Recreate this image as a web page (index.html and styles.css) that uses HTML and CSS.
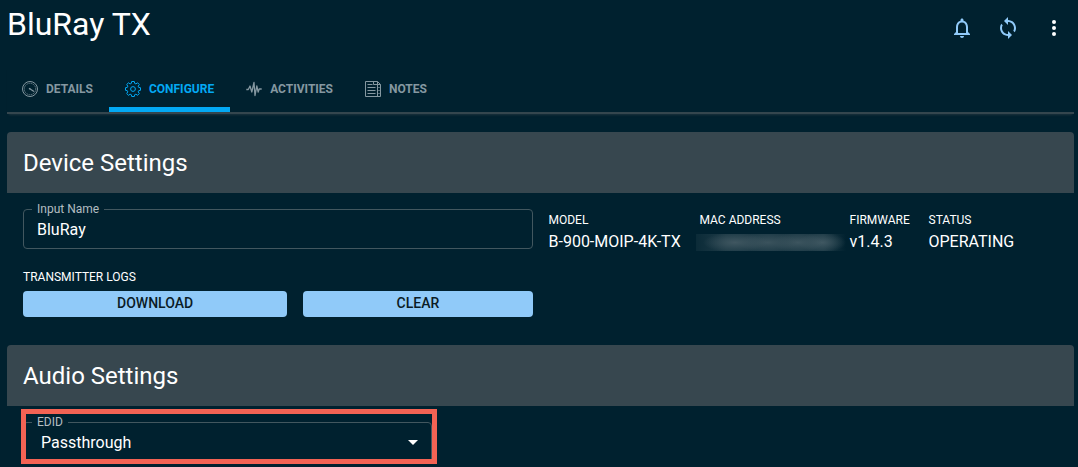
FILE: index.html
```html
<!DOCTYPE html>
<html lang="en">
<head>
<meta charset="utf-8">
<meta name="viewport" content="width=device-width, initial-scale=1">
<title>BluRay TX</title>
<link rel="stylesheet" href="styles.css">
</head>
<body>
<header class="topbar">
  <h1 class="title">BluRay TX</h1>
  <div class="actions">
    <button class="icon-button" type="button" aria-label="Notifications">
      <svg width="24" height="24" viewBox="0 0 24 24" fill="currentColor"><path d="M12 22c1.1 0 2-.9 2-2h-4c0 1.100.900 2 2 2zm6-6v-5c0-3.070-1.630-5.640-4.500-6.320V4c0-.830-.670-1.500-1.500-1.500s-1.500.670-1.500 1.500v.680C7.640 5.360 6 7.920 6 11v5l-2 2v1h16v-1l-2-2zm-2 1H8v-6c0-2.480 1.510-4.500 4-4.500s4 2.020 4 4.500v6z"/></svg>
    </button>
    <button class="icon-button" type="button" aria-label="Refresh">
      <svg width="24" height="24" viewBox="0 0 24 24" fill="currentColor"><path d="M12 4V1L8 5l4 4V6c3.310 0 6 2.690 6 6 0 1.010-.250 1.970-.700 2.800l1.460 1.460C19.540 15.030 20 13.570 20 12c0-4.420-3.580-8-8-8zm0 14c-3.310 0-6-2.690-6-6 0-1.010.250-1.970.700-2.800L5.240 7.740C4.460 8.970 4 10.430 4 12c0 4.420 3.580 8 8 8v3l4-4-4-4v3z"/></svg>
    </button>
    <button class="icon-button icon-button-plain" type="button" aria-label="More options">
      <svg width="24" height="24" viewBox="0 0 24 24" fill="currentColor"><circle cx="12" cy="6" r="2"/><circle cx="12" cy="12" r="2"/><circle cx="12" cy="18" r="2"/></svg>
    </button>
  </div>
</header>

<nav class="tabs">
  <a class="tab" href="#details">
    <svg class="tab-icon" width="16" height="16" viewBox="0 0 16 16" fill="none" stroke="currentColor"><circle cx="8" cy="8" r="7.500"/><circle cx="8" cy="8" r="5.700" stroke-width=".7" stroke-dasharray="1.500 .6"/><path d="M7 7.300l5 3.200" stroke-width="1.200"/><circle cx="7.700" cy="7.800" r=".8" fill="currentColor" stroke="none"/></svg>
    DETAILS
  </a>
  <a class="tab tab-active" href="#configure" aria-current="page">
    <svg class="tab-icon" width="16" height="16" viewBox="0 0 16 16" fill="none" stroke="currentColor" stroke-linejoin="round"><path d="M6.700.5h2.600l.4 1.900 1.200.5 1.700-1.100 1.700 1.700-1.100 1.700.5 1.200 1.800.3v2.600l-1.800.4-.5 1.200 1.100 1.600-1.700 1.800-1.700-1.100-1.200.5-.4 1.800H6.700l-.4-1.800-1.200-.5-1.600 1.100-1.800-1.800 1.100-1.600-.5-1.200-1.800-.4V6.700l1.800-.3.5-1.200-1.100-1.700 1.800-1.700 1.600 1.100 1.200-.5z"/><circle cx="8" cy="8" r="2.400"/></svg>
    CONFIGURE
  </a>
  <a class="tab" href="#activities">
    <svg class="tab-icon" width="16" height="16" viewBox="0 0 16 16" fill="none" stroke="currentColor" stroke-width="1.300" stroke-linejoin="round"><path d="M.3 8.500h2L4 5l1.800 6L8 1.500l1 13L10.800 5l1.400 6 1-3h2.500"/></svg>
    ACTIVITIES
  </a>
  <a class="tab" href="#notes">
    <svg class="tab-icon" width="16" height="16" viewBox="0 0 16 16" fill="none" stroke="currentColor"><path d="M.5.5h12l3 3v12H.5zM8.500.5v3h4M12.500.5v15M12.500 3.500h3M2.500 3.500h5M2.500 6.500h8M2.500 9.500h8M2.500 12.500h8"/><path d="M13 6.500h2M13 9.500h2M13 12.500h2" stroke-width=".6"/></svg>
    NOTES
  </a>
</nav>

<main>
  <section class="card">
    <h2 class="card-title">Device Settings</h2>
    <div class="card-body settings">
      <fieldset class="field">
        <legend class="field-label"><label for="input-name">Input Name</label></legend>
        <input class="field-control" id="input-name" type="text" value="BluRay">
      </fieldset>
      <dl class="facts">
        <div><dt>MODEL</dt><dd>B-900-MOIP-4K-TX</dd></div>
        <div><dt>MAC ADDRESS</dt><dd class="redacted" aria-label="Hidden"></dd></div>
        <div><dt>FIRMWARE</dt><dd>v1.4.3</dd></div>
        <div><dt>STATUS</dt><dd>OPERATING</dd></div>
      </dl>
      <div class="logs">
        <h3 class="logs-title">TRANSMITTER LOGS</h3>
        <div class="logs-actions">
          <button class="button" type="button">DOWNLOAD</button>
          <button class="button" type="button">CLEAR</button>
        </div>
      </div>
    </div>
  </section>

  <section class="card">
    <h2 class="card-title">Audio Settings</h2>
    <div class="highlight">
      <fieldset class="field field-select">
        <legend class="field-label"><label for="edid">EDID</label></legend>
        <select class="field-control select-control" id="edid"><option>Passthrough</option></select>
        <svg class="select-arrow" width="24" height="24" viewBox="0 0 24 24" fill="currentColor"><path d="M7 10l5 5 5-5z"/></svg>
      </fieldset>
    </div>
  </section>
</main>
</body>
</html>
```

FILE: styles.css
```css
* { box-sizing: border-box; }

body {
  margin: 0;
  padding: 0 4px 3px 7px;
  background: #00212f;
  color: #fff;
  font-family: Roboto, "Liberation Sans", sans-serif;
  font-size: 16px;
}

h1, h2, h3, dl, dd { margin: 0; font-weight: 400; }

.topbar {
  display: flex;
  justify-content: space-between;
  height: 65px;
}

.title { font-size: 32px; line-height: 48px; }

.actions {
  display: flex;
  gap: 22px;
  padding: 16px 8px 0 0;
}

.icon-button {
  width: 24px;
  height: 24px;
  padding: 0;
  border: 0;
  background: none;
  color: #90caf9;
}

.icon-button svg { display: block; }
.icon-button-plain { color: #fff; }

.tabs {
  display: flex;
  height: 49px;
  border-bottom: 2px solid #34464e;
  box-shadow: 0 3px 2px -2px #1c333d;
}

.tab {
  display: flex;
  align-items: center;
  gap: 8px;
  padding: 5px 16px 0;
  border-bottom: 5px solid transparent;
  color: #8598a1;
  font-size: 12px;
  font-weight: 700;
  text-decoration: none;
}

.tab:first-child { padding-left: 15px; }

.tab-active {
  color: #03a9f4;
  border-bottom-color: #03a9f4;
}

main {
  display: grid;
  gap: 28px;
  margin-top: 18px;
}

.card-title {
  padding: 2px 16px 0;
  border-radius: 4px 4px 0 0;
  background: #37474f;
  font-size: 24px;
  line-height: 59px;
}

.card-body { padding: 9px 16px 0; }

.settings {
  display: grid;
  grid-template-columns: 1fr 1fr;
  column-gap: 16px;
  row-gap: 20px;
}

.field {
  min-width: 0;
  margin: 0;
  padding: 0 8px;
  border: 1px solid #42575f;
  border-radius: 4px;
}

.field-label {
  padding: 0 5px;
  color: #b3bdc1;
  font-size: 12px;
  line-height: 14px;
}

.field-control {
  display: block;
  width: 100%;
  height: 32px;
  padding: 0 5px 6px;
  border: 0;
  outline: 0;
  background: none;
  color: #fff;
  font: inherit;
}

.facts {
  display: grid;
  grid-row: span 2;
  grid-template-columns: 135px 134px 63px auto;
  align-self: start;
  justify-content: start;
  gap: 16px;
  padding-top: 8px;
}

.facts dt { font-size: 12px; line-height: 20px; }
.facts dd { line-height: 24px; white-space: nowrap; }

.facts .redacted {
  height: 17px;
  margin: 4px -12px 0 -4px;
  background:
    radial-gradient(ellipse 32px 10px at 26% 50%, #405761, transparent),
    radial-gradient(ellipse 30px 10px at 48% 50%, #3b535d, transparent),
    radial-gradient(ellipse 26px 10px at 68% 50%, #3d555f, transparent),
    radial-gradient(ellipse 24px 10px at 84% 50%, #405862, transparent),
    linear-gradient(90deg, #0b2b38, #1d3a46 20%, #1d3a46 85%, #00212f);
}

.logs-title { font-size: 12px; line-height: 16px; }

.logs-actions {
  display: grid;
  grid-template-columns: 264fr 229fr;
  gap: 16px;
  margin-top: 6px;
}

.button {
  height: 26px;
  padding: 0 0 2px;
  border: 0;
  border-radius: 4px;
  background: #90caf9;
  color: #0b1c26;
  font: 500 14px/24px Roboto, "Liberation Sans", sans-serif;
}

.highlight {
  width: 416px;
  max-width: 100%;
  height: 55px;
  margin: 3px 0 0 14px;
  border: 5px solid #f36354;
  overflow: hidden;
}

.field-select {
  position: relative;
  margin: 1px 0 0 -3px;
}

.select-control {
  height: 44px;
  padding: 0 32px 18px 9px;
  appearance: none;
}

.select-arrow {
  position: absolute;
  top: 1px;
  right: 6px;
  pointer-events: none;
}
```
